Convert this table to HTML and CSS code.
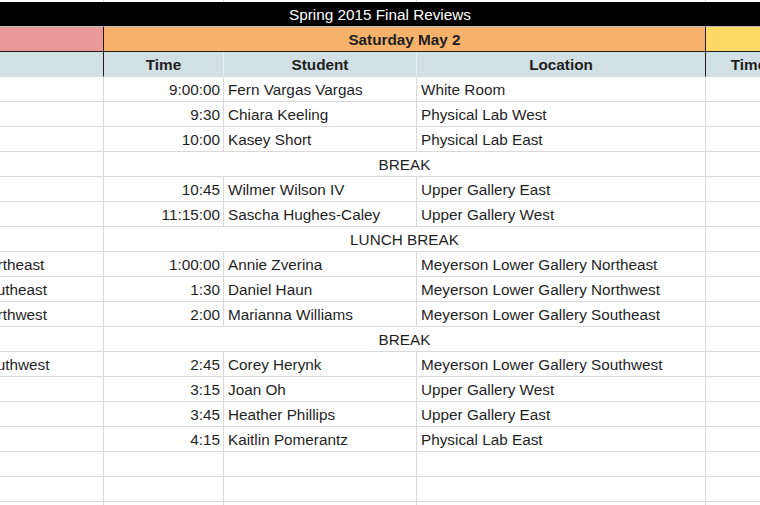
FILE: index.html
```html
<!DOCTYPE html>
<html>
<head>
<meta charset="utf-8">
<title>Spring 2015 Final Reviews</title>
<link rel="stylesheet" href="styles.css">
</head>
<body>
<div class="sheet">
  <div class="c strip"></div><div class="c strip"></div><div class="c strip"></div><div class="c strip"></div><div class="c strip"></div><div class="c strip"></div>

  <div class="title">Spring 2015 Final Reviews</div>

  <div class="date pink"></div>
  <div class="date orange span3">Saturday May 2</div>
  <div class="date yellow span2"></div>

  <div class="hd dark"></div>
  <div class="hd">Time</div>
  <div class="hd">Student</div>
  <div class="hd dark">Location</div>
  <div class="hd">Time</div>
  <div class="hd">Student</div>

  <div class="c"></div><div class="c t">9:00:00</div><div class="c">Fern Vargas Vargas</div><div class="c">White Room</div><div class="c"></div><div class="c"></div>
  <div class="c"></div><div class="c t">9:30</div><div class="c">Chiara Keeling</div><div class="c">Physical Lab West</div><div class="c"></div><div class="c"></div>
  <div class="c"></div><div class="c t">10:00</div><div class="c">Kasey Short</div><div class="c">Physical Lab East</div><div class="c"></div><div class="c"></div>
  <div class="c"></div><div class="c brk span3">BREAK</div><div class="c"></div><div class="c"></div>
  <div class="c"></div><div class="c t">10:45</div><div class="c">Wilmer Wilson IV</div><div class="c">Upper Gallery East</div><div class="c"></div><div class="c"></div>
  <div class="c"></div><div class="c t">11:15:00</div><div class="c">Sascha Hughes-Caley</div><div class="c">Upper Gallery West</div><div class="c"></div><div class="c"></div>
  <div class="c"></div><div class="c brk span3">LUNCH BREAK</div><div class="c"></div><div class="c"></div>
  <div class="c">Meyerson Lower Gallery Northeast</div><div class="c t">1:00:00</div><div class="c">Annie Zverina</div><div class="c">Meyerson Lower Gallery Northeast</div><div class="c"></div><div class="c"></div>
  <div class="c">Meyerson Lower Gallery Southeast</div><div class="c t">1:30</div><div class="c">Daniel Haun</div><div class="c">Meyerson Lower Gallery Northwest</div><div class="c"></div><div class="c"></div>
  <div class="c">Meyerson Lower Gallery Northwest</div><div class="c t">2:00</div><div class="c">Marianna Williams</div><div class="c">Meyerson Lower Gallery Southeast</div><div class="c"></div><div class="c"></div>
  <div class="c"></div><div class="c brk span3">BREAK</div><div class="c"></div><div class="c"></div>
  <div class="c">Meyerson Lower Gallery Southwest</div><div class="c t">2:45</div><div class="c">Corey Herynk</div><div class="c">Meyerson Lower Gallery Southwest</div><div class="c"></div><div class="c"></div>
  <div class="c"></div><div class="c t">3:15</div><div class="c">Joan Oh</div><div class="c">Upper Gallery West</div><div class="c"></div><div class="c"></div>
  <div class="c"></div><div class="c t">3:45</div><div class="c">Heather Phillips</div><div class="c">Upper Gallery East</div><div class="c"></div><div class="c"></div>
  <div class="c"></div><div class="c t">4:15</div><div class="c">Kaitlin Pomerantz</div><div class="c">Physical Lab East</div><div class="c"></div><div class="c"></div>
  <div class="c"></div><div class="c t"></div><div class="c"></div><div class="c"></div><div class="c"></div><div class="c"></div>
  <div class="c"></div><div class="c t"></div><div class="c"></div><div class="c"></div><div class="c"></div><div class="c"></div>
  <div class="c"></div><div class="c t"></div><div class="c"></div><div class="c"></div><div class="c"></div><div class="c"></div>
</div>
</body>
</html>
```
FILE: styles.css
```css
html, body {
  margin: 0;
  padding: 0;
  overflow: hidden;
  background: #ffffff;
}

.sheet {
  display: grid;
  grid-template-columns: 300px 120px 193px 289px 86px 164px;
  margin-left: -196px;
  width: 1152px;
  font-family: "Liberation Sans", Arial, sans-serif;
  font-size: 15.3px;
  color: #1f1f1f;
}

.c {
  box-sizing: border-box;
  height: 25px;
  line-height: 26px;
  padding: 0 4px;
  border-right: 1px solid #d9d9d9;
  border-bottom: 1px solid #d9d9d9;
  white-space: nowrap;
  overflow: hidden;
}

.strip {
  height: 2px;
  border-bottom: none;
}

.t {
  text-align: right;
  padding-right: 3px;
}

.brk {
  text-align: center;
}

.span3 {
  grid-column: span 3;
}

.span2 {
  grid-column: span 2;
}

.title {
  grid-column: 1 / -1;
  box-sizing: border-box;
  height: 24px;
  line-height: 25px;
  background: #000000;
  color: #ffffff;
  text-align: center;
  white-space: nowrap;
}

.date {
  box-sizing: border-box;
  height: 26px;
  line-height: 26px;
  border-top: 1px solid #bdbdbd;
  border-bottom: 1px solid #1e1e1e;
  border-right: 1px solid #1e1e1e;
  font-weight: bold;
  text-align: center;
  white-space: nowrap;
}

.pink {
  background: #ea9999;
}

.orange {
  background: #f6b26b;
}

.yellow {
  background: #ffd966;
  border-right: none;
}

.hd {
  box-sizing: border-box;
  height: 25px;
  line-height: 26px;
  background: #d0e0e3;
  font-weight: bold;
  text-align: center;
  border-right: 1px solid #e6eef0;
  border-bottom: 1px solid #d9d9d9;
  white-space: nowrap;
  overflow: hidden;
}

.hd.dark {
  border-right: 1px solid #1e1e1e;
}
```
